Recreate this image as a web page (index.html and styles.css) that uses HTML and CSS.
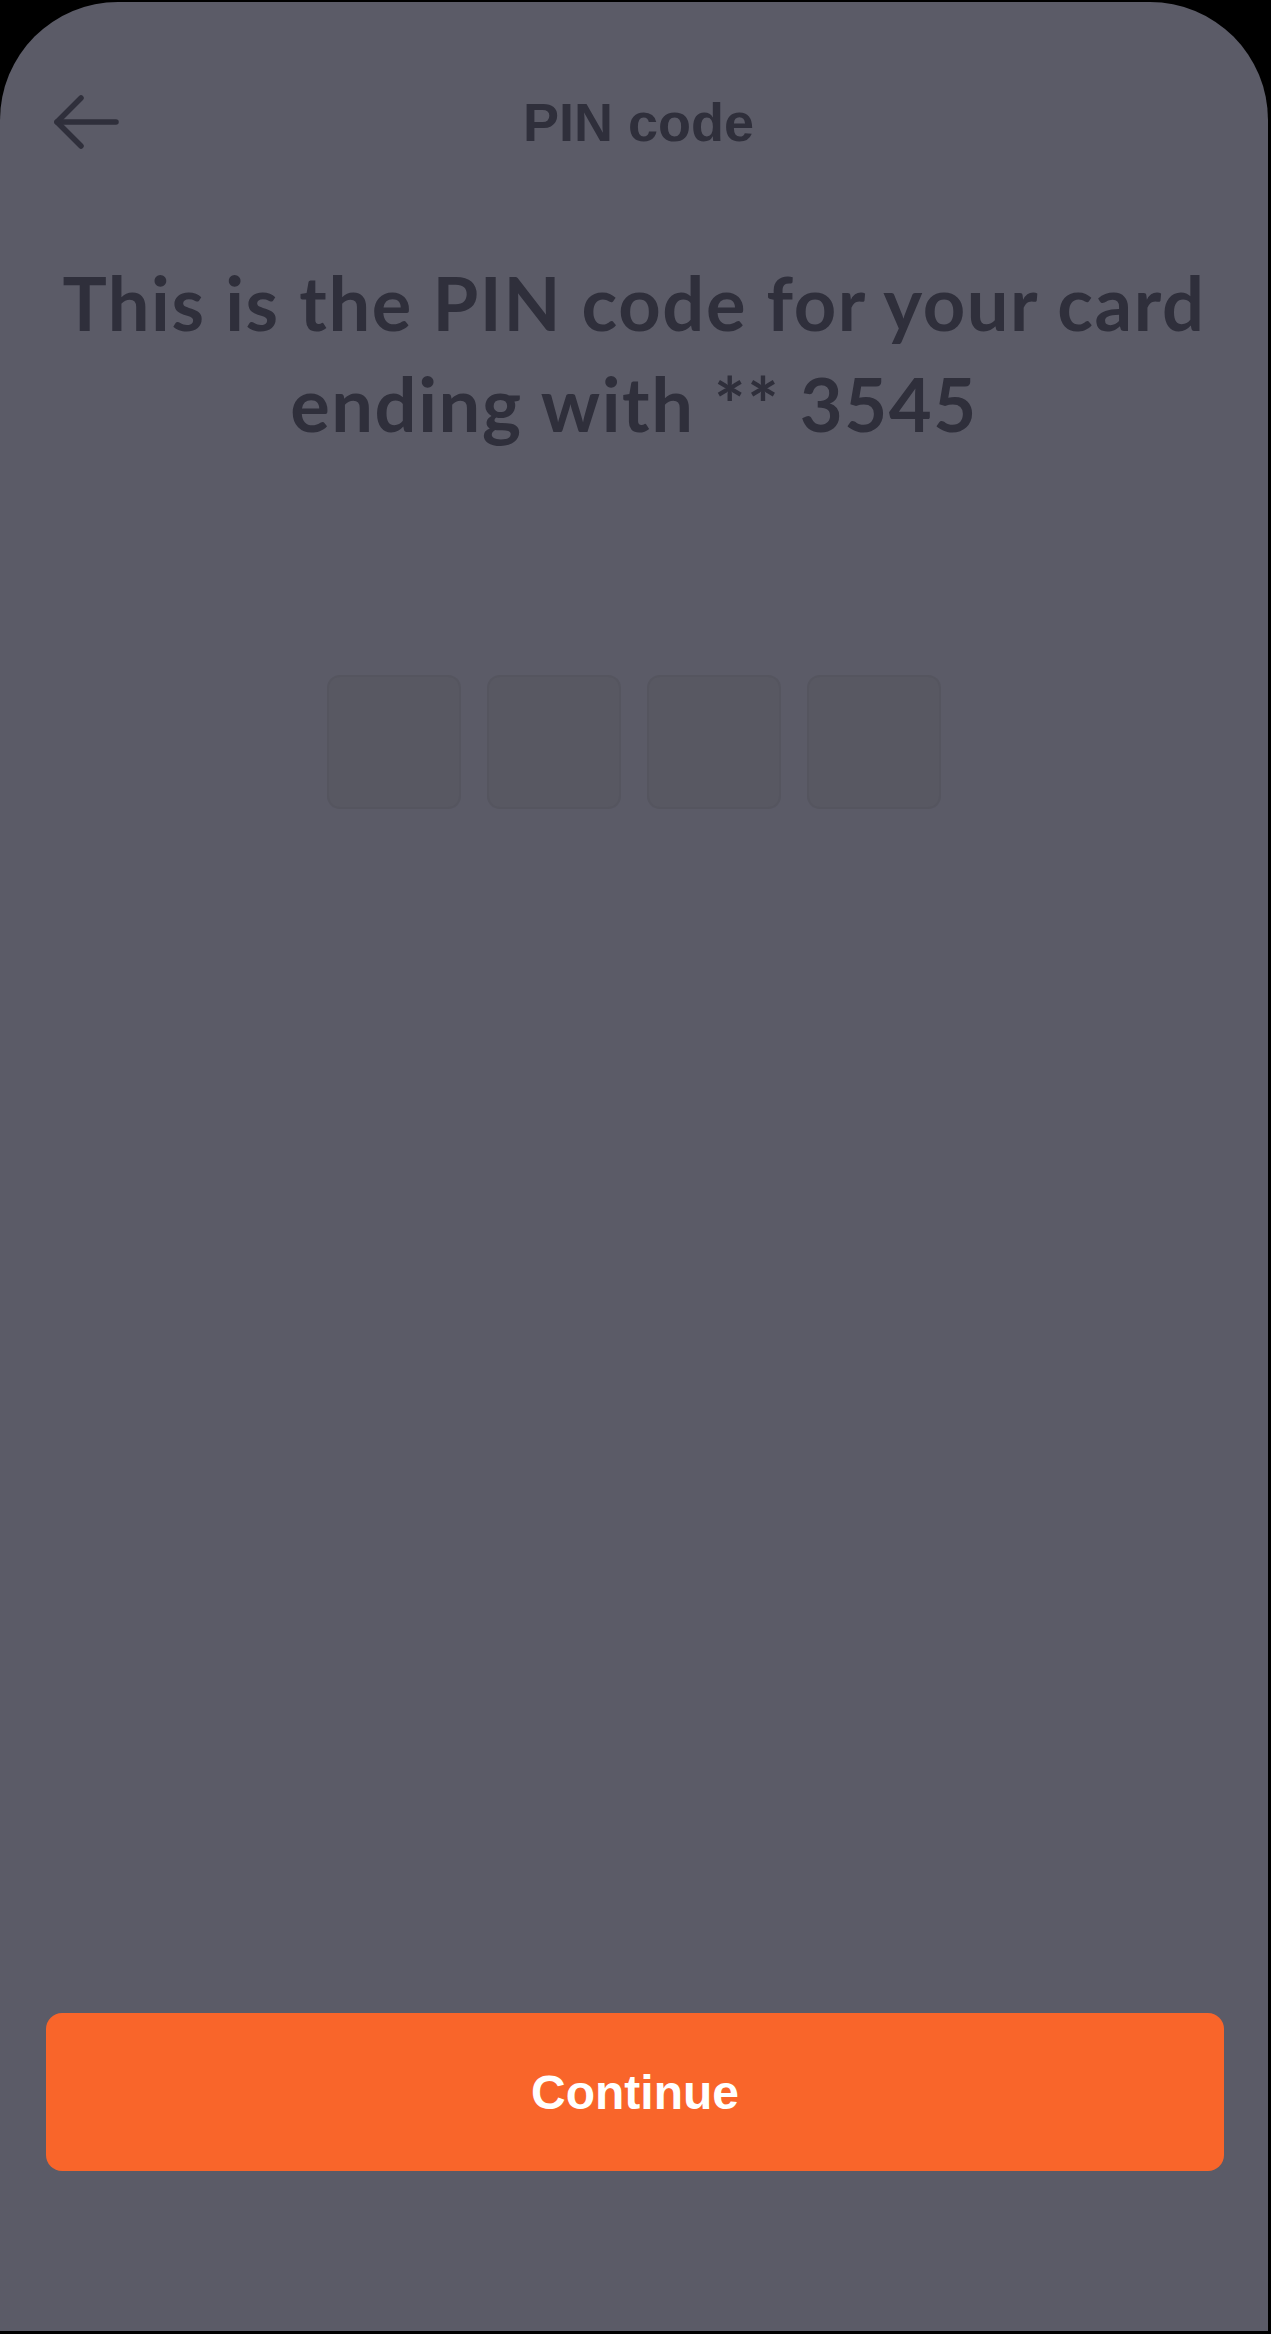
FILE: index.html
```html
<!DOCTYPE html>
<html lang="en">
<head>
<meta charset="utf-8">
<title>PIN code</title>
<link rel="stylesheet" href="styles.css">
</head>
<body>
<div class="screen">
  <header class="topbar">
    <button class="back" aria-label="Back">
      <svg width="66" height="54" viewBox="0 0 66 54" fill="none" stroke="#2f2f3b" stroke-width="5.5" stroke-linecap="round" stroke-linejoin="round">
        <path d="M4 27 H63"/>
        <path d="M28 3 L4 27 L28 51"/>
      </svg>
    </button>
    <h1 class="title">PIN code</h1>
    <span class="spacer"></span>
  </header>
  <h2 class="headline">This is the PIN code for your card ending with ** 3545</h2>
  <div class="pin">
    <span class="digit"></span>
    <span class="digit"></span>
    <span class="digit"></span>
    <span class="digit"></span>
  </div>
  <div class="fill"></div>
  <button class="cta">Continue</button>
</div>
</body>
</html>
```

FILE: styles.css
```css
html, body {
  margin: 0;
  padding: 0;
  background: #000;
}
body {
  width: 1271px;
  height: 2334px;
  overflow: hidden;
}
.screen {
  margin-top: 2px;
  width: 1268px;
  height: 2329px;
  background: #5b5b67;
  border-radius: 118px 118px 0 0;
  display: flex;
  flex-direction: column;
  box-sizing: border-box;
}
.topbar {
  margin-top: 60px;
  height: 120px;
  padding: 0 44px 0 53px;
  display: grid;
  grid-template-columns: 1fr auto 1fr;
  align-items: center;
}
.back {
  background: none;
  border: 0;
  padding: 0;
  width: 66px;
  height: 54px;
  display: flex;
  align-items: center;
}
.title {
  margin: 0;
  font-family: "Liberation Sans", Arial, sans-serif;
  font-weight: 700;
  font-size: 54px;
  color: #2f2f3b;
}
.headline {
  margin: 70px 30px 0;
  text-align: center;
  font-family: Lato, "Liberation Sans", sans-serif;
  font-weight: 700;
  font-size: 74px;
  letter-spacing: 1.6px;
  line-height: 101px;
  color: #2f2f3b;
}
.pin {
  margin-top: 221px;
  display: flex;
  justify-content: center;
  gap: 26px;
}
.digit {
  width: 134px;
  height: 134px;
  box-sizing: border-box;
  border-radius: 13px;
  background: #585862;
  border: 2px solid #55555f;
}
.fill {
  flex: 1;
}
.cta {
  margin: 0 44px 160px 46px;
  height: 158px;
  border: 0;
  border-radius: 16px;
  background: #f9652a;
  color: #fff;
  font-family: "Liberation Sans", Arial, sans-serif;
  font-weight: 700;
  font-size: 48px;
}
```
